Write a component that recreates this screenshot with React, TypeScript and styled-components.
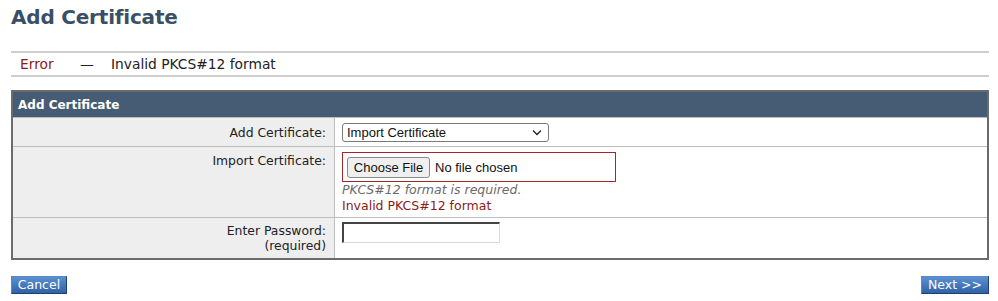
import React from 'react';
import styled, { createGlobalStyle } from 'styled-components';

const Global = createGlobalStyle`
  body {
    margin: 0;
    background: #ffffff;
    font-family: "DejaVu Sans", Verdana, sans-serif;
    color: #222;
  }
`;

const Page = styled.div`
  width: 978px;
  padding: 0 9px 0 11px;
`;

const Title = styled.h1`
  margin: 0;
  padding-top: 5px;
  height: 28px;
  font-size: 20px;
  font-weight: bold;
  color: #3a4f66;
  letter-spacing: -0.2px;
`;

const Notice = styled.div`
  margin-top: 18px;
  height: 22px;
  display: flex;
  align-items: center;
  border-top: 2px solid #cfcfcf;
  border-bottom: 2px solid #cfcfcf;
  font-size: 13.8px;
`;

const NoticeLabel = styled.span`
  color: #8b1a1a;
  padding-left: 9px;
  width: 60px;
`;

const Dash = styled.span`
  width: 31px;
`;

const Panel = styled.div`
  margin-top: 13px;
  border: 2px solid #6b6b6b;
`;

const PanelHeader = styled.div`
  height: 25px;
  display: flex;
  align-items: center;
  padding-left: 5px;
  background: #465b74;
  color: #ffffff;
  font-size: 12px;
  font-weight: bold;
`;

const Row = styled.div<{ $h: number }>`
  display: grid;
  grid-template-columns: 322px 1fr;
  min-height: ${(p) => p.$h}px;
  border-top: 1px solid #bdbdbd;
`;

const Label = styled.div<{ $top?: boolean }>`
  background: #eeeeee;
  border-right: 1px solid #bdbdbd;
  display: flex;
  flex-direction: column;
  justify-content: ${(p) => (p.$top ? 'flex-start' : 'center')};
  align-items: flex-end;
  padding: ${(p) => (p.$top ? '6px' : '0')} 8px 0 0;
  font-size: 12.4px;
  line-height: 15px;
  text-align: right;
  color: #222;
`;

const Value = styled.div<{ $top?: boolean }>`
  display: flex;
  flex-direction: column;
  justify-content: ${(p) => (p.$top ? 'flex-start' : 'center')};
  align-items: flex-start;
  padding: ${(p) => (p.$top ? '5px' : '0')} 0 0 7px;
`;

const SelectBox = styled.div`
  width: 207px;
  height: 19px;
  box-sizing: border-box;
  border: 1px solid #7a7a7a;
  border-radius: 3px;
  display: flex;
  align-items: center;
  justify-content: space-between;
  padding: 0 6px 0 4px;
  font-family: "Liberation Sans", Arial, sans-serif;
  font-size: 13px;
  color: #111;
`;

const FileBox = styled.div`
  width: 274px;
  height: 30px;
  box-sizing: border-box;
  border: 1px solid #a3262b;
  display: flex;
  align-items: center;
  gap: 5px;
  padding-left: 4px;
  font-family: "Liberation Sans", Arial, sans-serif;
  font-size: 13px;
  color: #111;
`;

const FileButton = styled.div`
  width: 83px;
  height: 21px;
  box-sizing: border-box;
  border: 1px solid #8a8a8a;
  border-radius: 3px;
  background: #efefef;
  display: flex;
  align-items: center;
  justify-content: center;
`;

const Hint = styled.div<{ $error?: boolean }>`
  font-size: 12.5px;
  line-height: 16px;
  font-style: ${(p) => (p.$error ? 'normal' : 'italic')};
  color: ${(p) => (p.$error ? '#8b1a1a' : '#6a6a6a')};
`;

const PasswordInput = styled.div`
  width: 158px;
  height: 21px;
  box-sizing: border-box;
  border-style: solid;
  border-width: 2px 1px 1px 2px;
  border-color: #444 #d9d9d9 #d9d9d9 #444;
  margin-top: -12px;
`;

const Actions = styled.div`
  margin-top: 16px;
  display: flex;
  justify-content: space-between;
`;

const Button = styled.button<{ $w: number }>`
  width: ${(p) => p.$w}px;
  height: 18px;
  padding: 0;
  border: 1px solid #1f3f6e;
  border-top-color: #5b88c4;
  border-left-color: #5b88c4;
  background: linear-gradient(#5a8fd0, #2f63a6);
  color: #ffffff;
  font-family: "DejaVu Sans", Verdana, sans-serif;
  font-size: 12.5px;
  line-height: 16px;
`;

const Chevron = () => (
  <svg width="10" height="7" viewBox="0 0 10 7">
    <path d="M1 1.5 L5 5.5 L9 1.5" fill="none" stroke="#222" strokeWidth="1.3" />
  </svg>
);

export default function App() {
  return (
    <Page>
      <Global />
      <Title>Add Certificate</Title>
      <Notice>
        <NoticeLabel>Error</NoticeLabel>
        <Dash>—</Dash>
        <span>Invalid PKCS#12 format</span>
      </Notice>
      <Panel>
        <PanelHeader>Add Certificate</PanelHeader>
        <Row $h={28}>
          <Label>Add Certificate:</Label>
          <Value>
            <SelectBox>
              <span>Import Certificate</span>
              <Chevron />
            </SelectBox>
          </Value>
        </Row>
        <Row $h={70}>
          <Label $top>Import Certificate:</Label>
          <Value $top>
            <FileBox>
              <FileButton>Choose File</FileButton>
              <span>No file chosen</span>
            </FileBox>
            <Hint>PKCS#12 format is required.</Hint>
            <Hint $error>Invalid PKCS#12 format</Hint>
          </Value>
        </Row>
        <Row $h={40}>
          <Label>
            <div>Enter Password:</div>
            <div>(required)</div>
          </Label>
          <Value>
            <PasswordInput />
          </Value>
        </Row>
      </Panel>
      <Actions>
        <Button $w={56}>Cancel</Button>
        <Button $w={68}>Next &gt;&gt;</Button>
      </Actions>
    </Page>
  );
}
